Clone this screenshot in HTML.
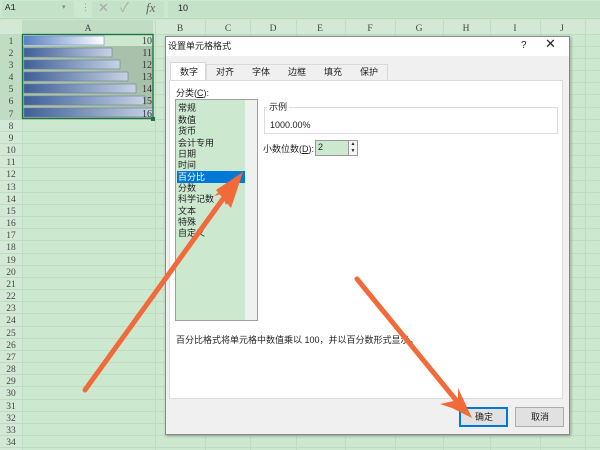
<!DOCTYPE html>
<html><head><meta charset="utf-8"><style>
*{margin:0;padding:0;box-sizing:border-box}
body{width:600px;height:450px;overflow:hidden;background:#cce8cf;font-family:"Liberation Sans","Noto Sans CJK SC",sans-serif;font-size:9px;color:#222;position:relative}
.abs{position:absolute}
.t{position:absolute;white-space:nowrap;line-height:11px}
</style></head><body>
<div class="abs" style="left:0;top:0;width:600px;height:19px;background:#cce8cf;border-bottom:1px solid #b8d4bb"></div>
<div class="abs" style="left:2px;top:1px;width:72px;height:16px;background:#c4e2c7"></div>
<div class="t" style="left:5px;top:3px;font-family:'Liberation Mono',monospace;font-size:9px">A1</div>
<div class="t" style="left:62px;top:2px;color:#888;font-size:7px">▾</div>
<div class="t" style="left:81px;top:2px;color:#999">⋮</div>
<div class="abs" style="left:92px;top:1px;width:72px;height:16px;background:#c4e2c7"></div>
<div class="t" style="left:98px;top:2px;color:#aaa;font-size:13px">✕</div>
<div class="t" style="left:120px;top:2px;color:#aaa;font-size:13px">✓</div>
<div class="t" style="left:146px;top:2px;color:#666;font-size:13px;font-family:'Liberation Serif',serif;font-style:italic">fx</div>
<div class="abs" style="left:168px;top:1px;width:432px;height:16px;background:#c4e2c7"></div>
<div class="t" style="left:178px;top:3px;font-size:9px">10</div>
<svg class="abs" style="left:0;top:20px" width="600" height="430">
<rect x="0" y="0" width="600" height="14" fill="#d3e9d5"/>
<rect x="0" y="0" width="22" height="430" fill="#d3e9d5"/>
<rect x="22" y="0" width="131" height="14" fill="#c0dcc3"/>
<rect x="0" y="14" width="22" height="85" fill="#c0dcc3"/>
<g stroke="#bedcc1" stroke-width="1">
<line x1="155.5" y1="0" x2="155.5" y2="430"/><line x1="205.5" y1="0" x2="205.5" y2="430"/><line x1="250.5" y1="0" x2="250.5" y2="430"/><line x1="296.5" y1="0" x2="296.5" y2="430"/><line x1="345.5" y1="0" x2="345.5" y2="430"/><line x1="395.5" y1="0" x2="395.5" y2="430"/><line x1="443.5" y1="0" x2="443.5" y2="430"/><line x1="490.5" y1="0" x2="490.5" y2="430"/><line x1="540.5" y1="0" x2="540.5" y2="430"/><line x1="585.5" y1="0" x2="585.5" y2="430"/>
<line x1="22.5" y1="0" x2="22.5" y2="430"/>
</g>
<g stroke="#bedcc1">
<line x1="0" y1="14.5" x2="600" y2="14.5"/><line x1="0" y1="26.5" x2="600" y2="26.5"/><line x1="0" y1="38.5" x2="600" y2="38.5"/><line x1="0" y1="50.5" x2="600" y2="50.5"/><line x1="0" y1="62.5" x2="600" y2="62.5"/><line x1="0" y1="74.5" x2="600" y2="74.5"/><line x1="0" y1="87.5" x2="600" y2="87.5"/><line x1="0" y1="99.5" x2="600" y2="99.5"/><line x1="0" y1="111.5" x2="600" y2="111.5"/><line x1="0" y1="123.5" x2="600" y2="123.5"/><line x1="0" y1="135.5" x2="600" y2="135.5"/><line x1="0" y1="147.5" x2="600" y2="147.5"/><line x1="0" y1="160.5" x2="600" y2="160.5"/><line x1="0" y1="172.5" x2="600" y2="172.5"/><line x1="0" y1="184.5" x2="600" y2="184.5"/><line x1="0" y1="196.5" x2="600" y2="196.5"/><line x1="0" y1="208.5" x2="600" y2="208.5"/><line x1="0" y1="220.5" x2="600" y2="220.5"/><line x1="0" y1="233.5" x2="600" y2="233.5"/><line x1="0" y1="245.5" x2="600" y2="245.5"/><line x1="0" y1="257.5" x2="600" y2="257.5"/><line x1="0" y1="269.5" x2="600" y2="269.5"/><line x1="0" y1="281.5" x2="600" y2="281.5"/><line x1="0" y1="293.5" x2="600" y2="293.5"/><line x1="0" y1="306.5" x2="600" y2="306.5"/><line x1="0" y1="318.5" x2="600" y2="318.5"/><line x1="0" y1="330.5" x2="600" y2="330.5"/><line x1="0" y1="342.5" x2="600" y2="342.5"/><line x1="0" y1="354.5" x2="600" y2="354.5"/><line x1="0" y1="366.5" x2="600" y2="366.5"/><line x1="0" y1="379.5" x2="600" y2="379.5"/><line x1="0" y1="391.5" x2="600" y2="391.5"/><line x1="0" y1="403.5" x2="600" y2="403.5"/><line x1="0" y1="415.5" x2="600" y2="415.5"/><line x1="0" y1="427.5" x2="600" y2="427.5"/>
</g>
<defs><linearGradient id="g" x1="0" x2="1"><stop offset="0" stop-color="#3d5f98"/><stop offset="1" stop-color="#c8d2e4"/></linearGradient>
<linearGradient id="g1" x1="0" x2="1"><stop offset="0" stop-color="#5a80c4"/><stop offset="1" stop-color="#ffffff"/></linearGradient></defs>
<rect x="22" y="26" width="131" height="73" fill="#a9c0aa"/>
<rect x="24" y="16" width="80" height="9" fill="url(#g1)" stroke="#6a8ccc" stroke-width=".6"/>
<rect x="24" y="28" width="88" height="9" fill="url(#g)" stroke="#6a7d9a" stroke-width=".6"/>
<rect x="24" y="40" width="96" height="9" fill="url(#g)" stroke="#6a7d9a" stroke-width=".6"/>
<rect x="24" y="52" width="104" height="9" fill="url(#g)" stroke="#6a7d9a" stroke-width=".6"/>
<rect x="24" y="64" width="112" height="9" fill="url(#g)" stroke="#6a7d9a" stroke-width=".6"/>
<rect x="24" y="76" width="121" height="9" fill="url(#g)" stroke="#6a7d9a" stroke-width=".6"/>
<rect x="24" y="88" width="129" height="9" fill="url(#g)" stroke="#6a7d9a" stroke-width=".6"/>
<rect x="22.5" y="14.5" width="130.5" height="84" fill="none" stroke="#217346" stroke-width="1.4"/>
<rect x="151" y="97" width="4" height="4" fill="#217346"/>
<g font-family="Liberation Serif,serif" font-size="10" fill="#333" text-anchor="end">
<text x="152" y="24">10</text><text x="152" y="36">11</text><text x="152" y="48">12</text><text x="152" y="60">13</text><text x="152" y="72">14</text><text x="152" y="84">15</text><text x="152" y="97">16</text></g>
<g font-family="Liberation Serif,serif" font-size="9.5" fill="#444" text-anchor="middle">
<text x="88" y="11">A</text><text x="180" y="11">B</text><text x="228" y="11">C</text><text x="273" y="11">D</text><text x="320" y="11">E</text><text x="370" y="11">F</text><text x="419" y="11">G</text><text x="466" y="11">H</text><text x="515" y="11">I</text><text x="562" y="11">J</text>
<text x="11" y="24">1</text><text x="11" y="36">2</text><text x="11" y="48">3</text><text x="11" y="60">4</text><text x="11" y="72">5</text><text x="11" y="84">6</text><text x="11" y="97">7</text><text x="11" y="109">8</text><text x="11" y="121">9</text><text x="11" y="133">10</text><text x="11" y="145">11</text><text x="11" y="157">12</text><text x="11" y="170">13</text><text x="11" y="182">14</text><text x="11" y="194">15</text><text x="11" y="206">16</text><text x="11" y="218">17</text><text x="11" y="230">18</text><text x="11" y="243">19</text><text x="11" y="255">20</text><text x="11" y="267">21</text><text x="11" y="279">22</text><text x="11" y="291">23</text><text x="11" y="303">24</text><text x="11" y="316">25</text><text x="11" y="328">26</text><text x="11" y="340">27</text><text x="11" y="352">28</text><text x="11" y="364">29</text><text x="11" y="376">30</text><text x="11" y="389">31</text><text x="11" y="401">32</text><text x="11" y="413">33</text><text x="11" y="425">34</text></g>
</svg>
<div class="abs" style="left:165px;top:36px;width:405px;height:399px;background:#f0f0f0;border:1px solid #8a8a8a;box-shadow:1px 1px 3px rgba(0,0,0,.3)"></div>
<div class="abs" style="left:166px;top:37px;width:403px;height:19px;background:#fff"></div>
<div class="t" style="left:168px;top:41px;font-size:9px">设置单元格格式</div>
<div class="t" style="left:521px;top:40px;font-size:10px">?</div>
<div class="t" style="left:545px;top:38px;font-size:13px">✕</div>
<div class="abs" style="left:170px;top:62px;width:36px;height:19px;background:#fff;border:1px solid #d6d6d6;border-bottom:none"></div>
<div class="abs" style="left:206px;top:64px;width:182px;height:16px;border:1px solid #d9d9d9;border-bottom:none;background:#f0f0f0"></div>
<div class="t" style="left:180px;top:67px">数字</div>
<div class="t" style="left:216px;top:67px">对齐</div>
<div class="t" style="left:252px;top:67px">字体</div>
<div class="t" style="left:288px;top:67px">边框</div>
<div class="t" style="left:324px;top:67px">填充</div>
<div class="t" style="left:360px;top:67px">保护</div>
<div class="abs" style="left:169px;top:80px;width:394px;height:319px;background:#fff;border:1px solid #dcdcdc"></div>
<div class="t" style="left:176px;top:88px">分类(<u>C</u>):</div>
<div class="abs" style="left:175px;top:99px;width:83px;height:222px;background:#cce8cf;border:1px solid #a0a0a0"></div>
<div class="abs" style="left:245px;top:100px;width:12px;height:220px;background:#eef2ee"></div>
<div class="abs" style="left:177px;top:171px;width:68px;height:12px;background:#0078d7"></div>
<div class="t" style="left:178px;top:103px">常规</div>
<div class="t" style="left:178px;top:115px">数值</div>
<div class="t" style="left:178px;top:126px">货币</div>
<div class="t" style="left:178px;top:138px">会计专用</div>
<div class="t" style="left:178px;top:149px">日期</div>
<div class="t" style="left:178px;top:160px">时间</div>
<div class="t" style="left:178px;top:172px;color:#fff">百分比</div>
<div class="t" style="left:178px;top:183px">分数</div>
<div class="t" style="left:178px;top:194px">科学记数</div>
<div class="t" style="left:178px;top:206px">文本</div>
<div class="t" style="left:178px;top:217px">特殊</div>
<div class="t" style="left:178px;top:228px">自定义</div>
<div class="abs" style="left:264px;top:107px;width:294px;height:27px;border:1px solid #dcdcdc"></div>
<div class="t" style="left:267px;top:102px;background:#fff;padding:0 2px">示例</div>
<div class="t" style="left:270px;top:120px">1000.00%</div>
<div class="t" style="left:263px;top:144px">小数位数(<u>D</u>):</div>
<div class="abs" style="left:315px;top:140px;width:36px;height:16px;background:#cce8cf;border:1px solid #999"></div>
<div class="t" style="left:318px;top:142px">2</div>
<div class="abs" style="left:348px;top:140px;width:10px;height:16px;background:#f4f4f4;border:1px solid #999;font-size:5px;text-align:center;line-height:7px">▲<br>▼</div>
<div class="t" style="left:176px;top:335px">百分比格式将单元格中数值乘以 100，并以百分数形式显示。</div>
<div class="abs" style="left:459px;top:407px;width:49px;height:20px;background:#e1e1e1;border:1px solid #0078d7;box-shadow:inset 0 0 0 1px #0078d7"></div>
<div class="t" style="left:475px;top:412px">确定</div>
<div class="abs" style="left:515px;top:407px;width:49px;height:20px;background:#e1e1e1;border:1px solid #adadad"></div>
<div class="t" style="left:531px;top:412px">取消</div>
<svg class="abs" style="left:0;top:0" width="600" height="450">
<g stroke="#f06a3a" stroke-width="5" stroke-linecap="round" fill="#f06a3a">
<line x1="85" y1="390" x2="228" y2="192"/>
<line x1="357" y1="279" x2="460" y2="405"/>
</g>
<polygon points="243,172 214,196 222,194 226,205 230,199 234,198" fill="#f06a3a"/>
<polygon points="243,172 216,190 231,208" fill="#f06a3a"/>
<polygon points="472,418 452,408 440,404 458,400 458,388" fill="#f06a3a"/>
</svg>
</body></html>
